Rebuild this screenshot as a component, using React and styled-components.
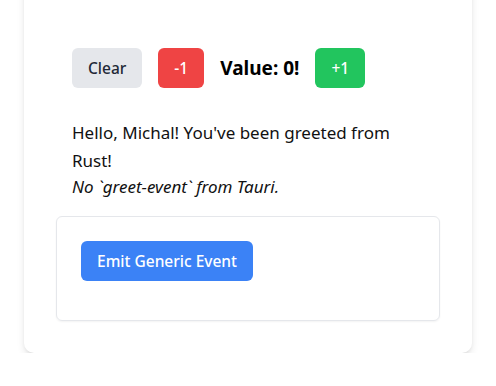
import React from "react";
import styled, { createGlobalStyle } from "styled-components";

const Global = createGlobalStyle`
  html, body { margin: 0; padding: 0; background: #ffffff; }
  body { font-family: "Noto Sans", "Open Sans", sans-serif; color: #111827; overflow: hidden; }
`;

const Page = styled.div`
  padding: 0 24px;
`;

const Card = styled.div`
  margin-top: -20px;
  background: #ffffff;
  border-radius: 10px;
  box-shadow: 0 4px 8px -1px rgba(0,0,0,0.12), 0 2px 4px -2px rgba(0,0,0,0.1);
  padding: 68px 32px 32px;
  display: flex;
  flex-direction: column;
`;

const Row = styled.div`
  display: flex;
  align-items: center;
  gap: 16px;
  padding: 0 16px;
  height: 40px;
`;

const Btn = styled.button`
  border: none;
  height: 40px;
  padding: 0 16px;
  border-radius: 6px;
  font-family: inherit;
  font-size: 15.5px;
  font-weight: 500;
  background: ${p => p.$bg};
  color: ${p => p.$fg};
  cursor: pointer;
`;

const Value = styled.span`
  font-size: 19px;
  font-weight: 700;
  color: #000;
`;

const Greeting = styled.p`
  margin: 31px 0 0;
  padding: 0 16px;
  font-size: 17px;
  line-height: 28px;
  color: #111;
`;

const Note = styled.p`
  margin: 0;
  padding: 0 16px;
  font-size: 17px;
  line-height: 24px;
  font-style: italic;
  color: #111;
`;

const Box = styled.div`
  margin-top: 17px;
  border: 1px solid #e5e7eb;
  border-radius: 6px;
  box-shadow: 0 1px 2px rgba(0,0,0,0.05);
  padding: 24px 24px 39px;
`;

export default function App() {
  return (
    <Page>
      <Global />
      <Card>
        <Row>
          <Btn $bg="#e5e7eb" $fg="#1f2937">Clear</Btn>
          <Btn $bg="#ef4444" $fg="#fff">-1</Btn>
          <Value>Value: 0!</Value>
          <Btn $bg="#22c55e" $fg="#fff">+1</Btn>
        </Row>
        <Greeting>Hello, Michal! You've been greeted from Rust!</Greeting>
        <Note>No `greet-event` from Tauri.</Note>
        <Box>
          <Btn $bg="#3b82f6" $fg="#fff">Emit Generic Event</Btn>
        </Box>
      </Card>
    </Page>
  );
}
